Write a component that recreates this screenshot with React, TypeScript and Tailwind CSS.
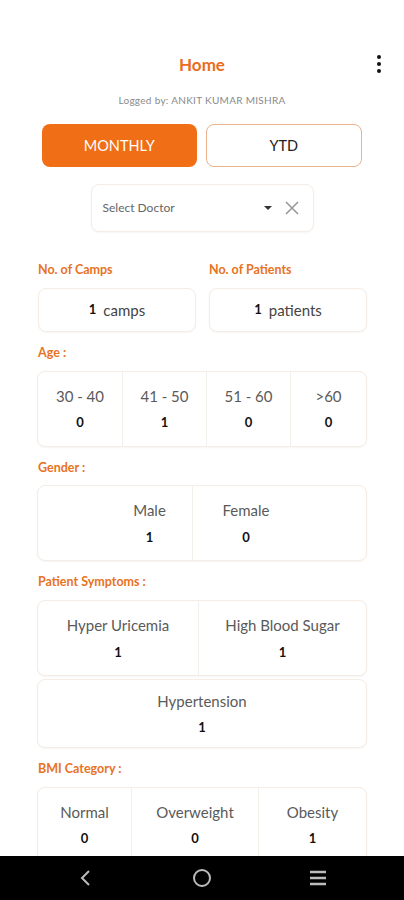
import React from "react";

const font = { fontFamily: "Lato, 'Noto Sans', sans-serif" };

function Label({ children }: { children: React.ReactNode }) {
  return <p className="px-[38px] text-[12.5px] font-bold text-[#e8731f]">{children}</p>;
}

function Stat({ label, value, className = "" }: { label: string; value: string; className?: string }) {
  return (
    <div className={"flex flex-col items-center justify-center gap-[6px] " + className}>
      <span className="text-[15px] text-[#5a5a5a]">{label}</span>
      <span className="text-[13px] font-bold text-[#111]">{value}</span>
    </div>
  );
}

const card = "rounded-[8px] border border-[#f5ece3] bg-white shadow-[0_1px_2px_rgba(0,0,0,0.04)]";

export default function App() {
  return (
    <div className="flex h-[900px] w-[404px] flex-col overflow-hidden bg-white" style={font}>
      <div className="flex-1 overflow-hidden">
        <header className="relative h-[48px]">
          <h1 className="absolute left-0 right-0 top-[52px] text-center text-[17px] font-bold text-[#ea6d1c]">Home</h1>
          <svg className="absolute right-[20px] top-[54px]" width="10" height="20" viewBox="0 0 10 20">
            <circle cx="5" cy="3" r="2" fill="#111" />
            <circle cx="5" cy="10" r="2" fill="#111" />
            <circle cx="5" cy="17" r="2" fill="#111" />
          </svg>
        </header>
        <p className="mt-[45px] text-center text-[10px] tracking-[0.3px] text-[#8a8a8a]">
          Logged by: ANKIT KUMAR MISHRA
        </p>

        <div className="mt-[16px] flex gap-[9px] px-[42px]">
          <button className="h-[43px] flex-1 rounded-[8px] bg-[#f06e15] text-[14.5px] text-white">MONTHLY</button>
          <button className="h-[43px] flex-1 rounded-[8px] border border-[#eab28c] bg-white text-[14.5px] text-[#222]">YTD</button>
        </div>

        <div className="mt-[17px] flex justify-center">
          <div className={"flex h-[48px] w-[223px] items-center pl-[11px] pr-[14px] " + card}>
            <span className="flex-1 text-[12px] text-[#666]">Select Doctor</span>
            <svg width="10" height="6" viewBox="0 0 10 6" className="mr-[12px]">
              <path d="M1 1 L5 5 L9 1 Z" fill="#333" />
            </svg>
            <svg width="14" height="14" viewBox="0 0 14 14">
              <path d="M1 1 L13 13 M13 1 L1 13" stroke="#999" strokeWidth="1.6" />
            </svg>
          </div>
        </div>

        <div className="mt-[29px] grid grid-cols-2 gap-[13px] px-[38px] pr-[37px]">
          <div>
            <p className="text-[12.5px] font-bold text-[#e8731f]">No. of Camps</p>
            <div className={"mt-[8px] flex h-[44px] items-center justify-center gap-[7px] " + card}>
              <span className="text-[13px] font-bold text-[#111]">1</span>
              <span className="text-[15px] text-[#444]">camps</span>
            </div>
          </div>
          <div>
            <p className="text-[12.5px] font-bold text-[#e8731f]">No. of Patients</p>
            <div className={"mt-[8px] flex h-[44px] items-center justify-center gap-[7px] " + card}>
              <span className="text-[13px] font-bold text-[#111]">1</span>
              <span className="text-[15px] text-[#444]">patients</span>
            </div>
          </div>
        </div>

        <div className="mt-[12px]">
          <Label>Age :</Label>
          <div className="mx-[37px] mt-[8px]">
            <div className={"flex h-[76px] " + card}>
              <Stat label="30 - 40" value="0" className="w-[85px] border-r border-[#f3f0ec]" />
              <Stat label="41 - 50" value="1" className="w-[84px] border-r border-[#f3f0ec]" />
              <Stat label="51 - 60" value="0" className="w-[84px] border-r border-[#f3f0ec]" />
              <Stat label=">60" value="0" className="flex-1" />
            </div>
          </div>
        </div>

        <div className="mt-[12px]">
          <Label>Gender :</Label>
          <div className="mx-[37px] mt-[8px]">
            <div className={"flex h-[76px] pl-[69px] " + card}>
              <Stat label="Male" value="1" className="w-[86px] border-r border-[#f3f0ec]" />
              <Stat label="Female" value="0" className="w-[106px]" />
            </div>
          </div>
        </div>

        <div className="mt-[12px]">
          <Label>Patient Symptoms :</Label>
          <div className="mx-[37px] mt-[8px] flex flex-col gap-[3px]">
            <div className={"flex h-[76px] " + card}>
              <Stat label="Hyper Uricemia" value="1" className="w-[161px] border-r border-[#f3f0ec]" />
              <Stat label="High Blood Sugar" value="1" className="flex-1" />
            </div>
            <div className={"flex h-[69px] " + card}>
              <Stat label="Hypertension" value="1" className="flex-1" />
            </div>
          </div>
        </div>

        <div className="mt-[12px]">
          <Label>BMI Category :</Label>
          <div className="mx-[37px] mt-[8px]">
            <div className={"flex h-[76px] " + card}>
              <Stat label="Normal" value="0" className="w-[94px] border-r border-[#f3f0ec]" />
              <Stat label="Overweight" value="0" className="w-[127px] border-r border-[#f3f0ec]" />
              <Stat label="Obesity" value="1" className="flex-1" />
            </div>
          </div>
        </div>
      </div>

      <nav className="flex h-[44px] shrink-0 items-center justify-center gap-[96px] bg-black">
        <svg width="20" height="20" viewBox="0 0 20 20">
          <path d="M13 3 L6 10 L13 17" stroke="#bbb" strokeWidth="2" fill="none" />
        </svg>
        <svg width="20" height="20" viewBox="0 0 20 20">
          <circle cx="10" cy="10" r="8" stroke="#bbb" strokeWidth="2" fill="none" />
        </svg>
        <svg width="20" height="18" viewBox="0 0 20 18">
          <path d="M2 3 H18 M2 9 H18 M2 15 H18" stroke="#bbb" strokeWidth="2.4" />
        </svg>
      </nav>
    </div>
  );
}
